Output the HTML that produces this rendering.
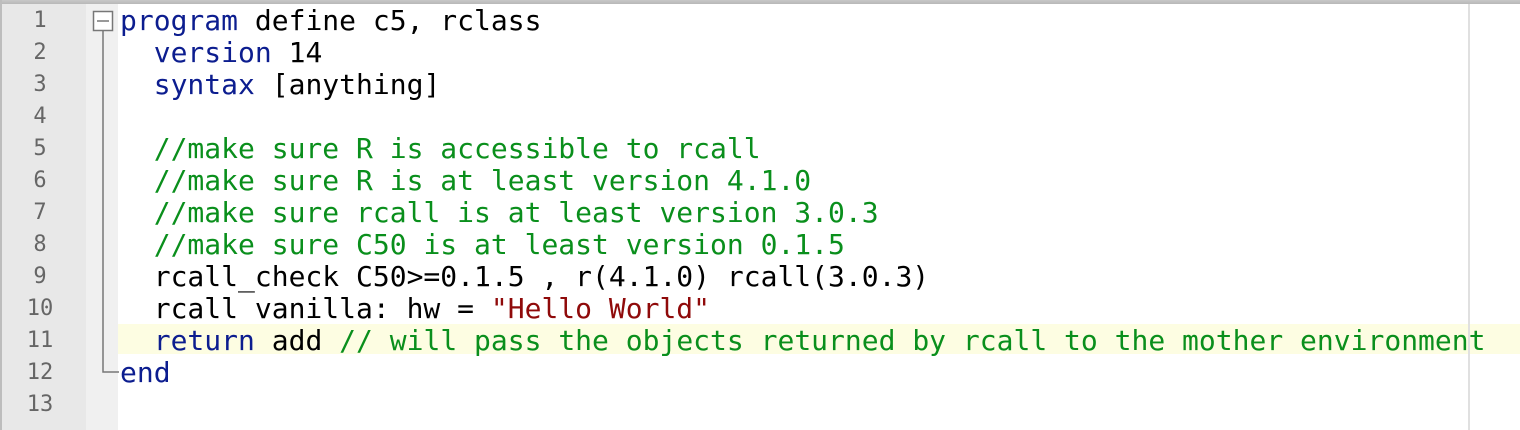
<!DOCTYPE html>
<html><head><style>
body{margin:0;width:1520px;height:430px;overflow:hidden;background:#fff;position:relative;font-family:"DejaVu Sans Mono","Liberation Mono",monospace}
.top{position:absolute;left:0;top:0;width:1520px;height:4px;background:linear-gradient(#c8c8c8,#b8b8b8)}
.lb{position:absolute;left:0;top:0;width:2px;height:430px;background:#bdbdbd}
.gut{position:absolute;left:2px;top:4px;width:84px;height:426px;background:#e8e8e8}
.fold{position:absolute;left:86px;top:4px;width:32px;height:426px;background:#f0f0f0}
.hl{position:absolute;left:118px;top:324px;width:1402px;height:30px;background:#fdfde2}
.edge{position:absolute;left:1468px;top:4px;width:2px;height:426px;background:#e0e0e0}
.ln{position:absolute;left:2px;width:76px;text-align:center;font-size:22px;color:#666;line-height:32px}
.code{position:absolute;left:120px;top:5px;font-size:28px;line-height:32px;white-space:pre;color:#000}
.k{color:#0c1d8f}.c{color:#0a8f1c}.s{color:#8f0a0a}
</style></head><body>
<div class="top"></div><div class="lb"></div><div class="gut"></div><div class="fold"></div>
<div class="hl"></div><div class="edge"></div>
<div class="ln" style="top:5px">1<br>2<br>3<br>4<br>5<br>6<br>7<br>8<br>9<br>10<br>11<br>12<br>13</div>
<svg style="position:absolute;left:86px;top:4px" width="34" height="380">
<rect x="7.5" y="7.5" width="19" height="19" fill="#fff" stroke="#777" stroke-width="1.5"/>
<line x1="11" y1="17" x2="23" y2="17" stroke="#777" stroke-width="1.5"/>
<polyline points="17,27 17,368 33,368" fill="none" stroke="#777" stroke-width="1.5"/>
</svg>
<div class="code"><span class="k">program</span> define c5, rclass
  <span class="k">version</span> 14
  <span class="k">syntax</span> [anything]

  <span class="c">//make sure R is accessible to rcall</span>
  <span class="c">//make sure R is at least version 4.1.0</span>
  <span class="c">//make sure rcall is at least version 3.0.3</span>
  <span class="c">//make sure C50 is at least version 0.1.5</span>
  rcall_check C50>=0.1.5 , r(4.1.0) rcall(3.0.3)
  rcall vanilla: hw = <span class="s">"Hello World"</span>
  <span class="k">return</span> add <span class="c">// will pass the objects returned by rcall to the mother environment</span>
<span class="k">end</span>
</div>
</body></html>
